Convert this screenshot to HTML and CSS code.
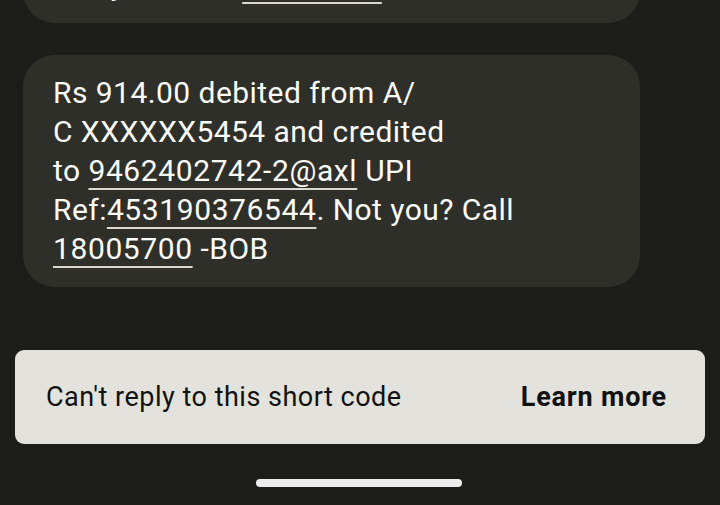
FILE: index.html
```html
<!DOCTYPE html>
<html lang="en">
<head>
<meta charset="utf-8">
<title>Messages</title>
<link rel="stylesheet" href="styles.css">
</head>
<body>
<main class="thread">
  <div class="bubble bubble-prev">
    <p class="msg">Not you? Call <span class="link">18005700</span> -BOB</p>
  </div>
  <div class="bubble">
    <p class="msg">Rs 914.00 debited from A/<br>C XXXXXX5454 and credited<br>to <span class="link">9462402742-2@axl</span> UPI<br>Ref:<span class="link">453190376544</span>. Not you? Call<br><span class="link">18005700</span> -BOB</p>
  </div>
</main>
<div class="notice">
  <span class="notice-text">Can't reply to this short code</span>
  <span class="notice-action">Learn more</span>
</div>
<div class="home-bar"></div>
</body>
</html>
```

FILE: styles.css
```css
html, body {
  margin: 0;
  padding: 0;
}
body {
  width: 720px;
  height: 505px;
  overflow: hidden;
  background: #1c1c18;
  font-family: Roboto, "Noto Sans", sans-serif;
}
.thread {
  display: flex;
  flex-direction: column;
  gap: 32px;
  padding-left: 23px;
}
.bubble {
  width: 617px;
  box-sizing: border-box;
  background: #2f2f2a;
  border-radius: 32px;
  padding: 18px 30px 19px 30px;
}
.bubble-prev {
  margin-top: -53px;
}
.msg {
  margin: 0;
  color: #fbfbf8;
  font-size: 30px;
  letter-spacing: 0.45px;
  line-height: 39px;
}
.link {
  text-decoration: underline;
  text-decoration-color: #d9d9d2;
  text-decoration-thickness: 2px;
  text-underline-offset: 7px;
  letter-spacing: 0.6px;
}
.notice {
  margin: 63px 15px 0 15px;
  height: 94px;
  background: #e3e2dc;
  border-radius: 9px;
  display: flex;
  align-items: center;
  justify-content: space-between;
  padding: 0 38px 0 31px;
  font-size: 27px;
  letter-spacing: 0.5px;
  color: #111;
}
.notice-action {
  font-weight: 700;
  letter-spacing: 0.8px;
}
.home-bar {
  width: 206px;
  height: 8px;
  border-radius: 4px;
  background: #ececec;
  margin: 35px auto 0 256px;
}
```
